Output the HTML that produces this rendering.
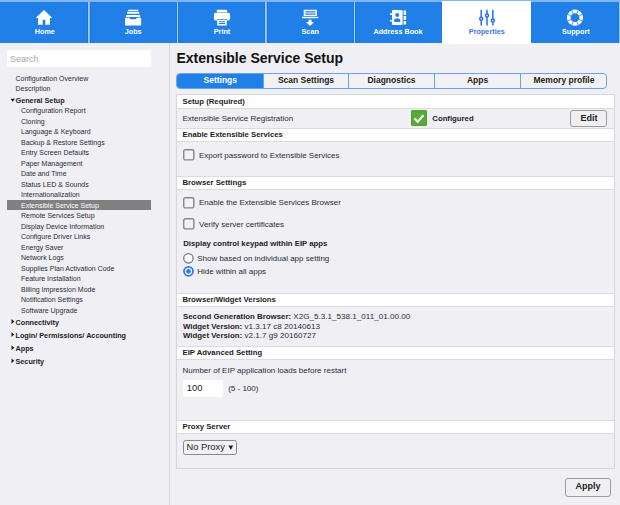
<!DOCTYPE html>
<html><head><meta charset="utf-8"><title>Extensible Service Setup</title>
<style>
*{box-sizing:border-box;margin:0;padding:0}
html,body{width:620px;height:505px;overflow:hidden;background:#efeff4;font-family:"Liberation Sans",Arial,sans-serif;color:#222}
body{position:relative}
.abs{position:absolute}
#nav{position:absolute;left:0;top:0;width:620px;height:43px;background:#2080e8;border-top:2px solid #80b6f3}
.lb{position:absolute;top:24.5px;width:60px;text-align:center;color:#fff;font-weight:bold;font-size:7.25px;line-height:9px;white-space:nowrap}
.ic{position:absolute;top:7px;width:20px;height:18px}
.wt{position:absolute;left:442px;top:-1px;width:89px;height:43px;background:#fff}
.sep{position:absolute;top:0;width:1px;height:41px;background:#7db5f2;box-shadow:-1px 0 0 #1676e5,1px 0 0 #1676e5}
#side{position:absolute;left:0;top:43px;width:170px;height:462px;border-right:1px solid #d4d4da}
#search{position:absolute;left:7px;top:7px;width:144px;height:16.5px;background:#fff;border-radius:2px;font-size:9px;color:#a6a6a6;line-height:18px;padding-left:3px}
.it{position:absolute;left:15.5px;font-size:7px;line-height:10px;white-space:nowrap;color:#2c2c34}
.it.s{left:21px}
.it.h{font-weight:bold;font-size:7.25px;color:#222}
.it.h:before{content:"";position:absolute;left:-6px;top:0;width:6px;height:10px;background:#1a1a1a;clip-path:polygon(2px 1.5px,4.8px 3.9px,2px 6.3px)}
.it.h.open:before{clip-path:polygon(1.1px 2.7px,5.4px 2.7px,3.25px 5.7px)}
#sel{position:absolute;left:6.8px;top:157.2px;width:144.2px;height:10.3px;background:#808080}
h1{position:absolute;left:176.5px;top:49px;font-size:14px;line-height:18px;font-weight:bold;color:#111;white-space:nowrap}
#tabs{position:absolute;left:176px;top:73px;width:431px;height:16px;border:1px solid #64a5eb;border-radius:4px;background:#f1f1f6;overflow:hidden}
#tabs div{position:absolute;top:-1px;height:16px;line-height:15.5px;text-align:center;font-weight:bold;font-size:8.5px;color:#222;border-left:1px solid #64a5eb}
#tabs div.on{background:#2080e8;color:#fff;border-left:0}
#panel{position:absolute;left:176px;top:94px;width:439px;height:375px;border:1px solid #d6d6dc;background:#efeff4}
.hd{position:absolute;left:0;width:437px;height:14px;background:#fff;border-top:1px solid #dcdce0;border-bottom:1px solid #dcdce0;font-weight:bold;font-size:7.75px;line-height:12.5px;padding-left:5.5px;color:#222}
.tx{position:absolute;font-size:8px;line-height:10px;white-space:nowrap;color:#2c2c34}
.b{font-weight:bold;color:#222}
.vv .b{font-size:7.850px}
.btn{position:absolute;border:1px solid #9c9c9c;border-radius:3px;background:#f0f0f2;font-weight:bold;font-size:9px;text-align:center;color:#222}
</style></head><body>
<div id="nav">
 <div class="wt"></div>
 <div class="sep" style="left:88px;width:2px;background:linear-gradient(90deg,#a6c9f5 50%,#8dbaf2 50%)"></div><div class="sep" style="left:177px;background:#b9d4f7"></div><div class="sep" style="left:265px;width:2px;background:linear-gradient(90deg,#a6c9f5 50%,#8dbaf2 50%)"></div><div class="sep" style="left:354px;background:#b9d4f7"></div><div class="sep" style="left:619px;background:#a6c9f5"></div>
 <svg class="ic" style="left:34.07px" viewBox="0 0 20 18"><path fill="#fff" d="M10 0.9 L1.7 8.9 H4 V15.8 H8.7 V10.8 H11.3 V15.8 H16 V8.9 H18.3 Z"/></svg>
 <span class="lb" style="left:14.8px">Home</span>
 <svg class="ic" style="left:123.15px" viewBox="0 0 20 18"><path fill="#fff" fill-rule="evenodd" d="M5.2 .7h10v1.3h-10zM4.2 2.8h12v2h-12zM3.1 5.9h14.1v2.2H3.1zM2.1 8.7H6.6c.3 1.2.8 1.6 1.6 1.6h3.9c.8 0 1.3-.4 1.6-1.6h4.4v7.2q0 .7-.7.7H2.8q-.7 0-.7-.7z"/></svg>
 <span class="lb" style="left:103.2px">Jobs</span>
 <svg class="ic" style="left:211.95px" viewBox="0 0 20 18"><path fill="#fff" fill-rule="evenodd" d="M5.600 .700h8.800q.8 0 .8.800V3.300H4.800V1.500q0-.8.800-.8zM3.600 3.700h12.800q1.700 0 1.700 1.700v4.300q0 1.700-1.700 1.700h-1.200v-1.200H4.800v1.200H3.600q-1.700 0-1.700-1.700V5.400q0-1.700 1.700-1.700zM5.200 10.900h9.600v5.100q0 .6-.6.600H5.800q-.6 0-.6-.6zM6.800 12.300v1h6.400v-1zM6.800 14.100v.9h6.400v-.9z"/></svg>
 <span class="lb" style="left:192px">Print</span>
 <svg class="ic" style="left:300.05px" viewBox="0 0 20 18"><path fill="#fff" fill-rule="evenodd" d="M3.700 .700h13.200v6.200H3.700zM5.200 2.300v1.300h10.300V2.300zM5.200 4.400v1.300h10.300V4.400zM1.900 7.800h16.300v1.500H1.900zM8.500 10.800h3v2.100h2.500L10 16.900 6 12.900h2.500z"/></svg>
 <span class="lb" style="left:280.2px">Scan</span>
 <svg class="ic" style="left:388.0px" viewBox="0 0 20 18"><path fill="#fff" fill-rule="evenodd" d="M4.700 1.100h9.200q.7 0 .7.700v13.500q0 .700-.700.700H4.700q-.700 0-.700-.700V12.600H1.900V10.900H4V5.900H1.900V4.300H4V1.800q0-.700.700-.700zM9.200 3.900a2 2 0 1 1 0 4a2 2 0 0 1 0-4zM6.100 13v-1.500c0-3 6.200-3 6.200 0V13zM15.600 1.500h1.900q.6 0 .6.600v3.800h-2.500zM15.600 6.900h2.500v4.200h-2.500zM15.600 12.100h2.500v2.900q0 .6-.6.6h-1.900z"/></svg>
 <span class="lb" style="left:368px">Address Book</span>
 <svg class="ic" style="left:476.76px" viewBox="0 0 20 18"><g stroke="#2b6fee" stroke-width="1.5" fill="#fff"><path d="M4.200 .8v15.600M10 .8v15.600M15.850 .8v15.600"/><circle cx="4.200" cy="9.700" r="1.500"/><circle cx="10" cy="6.500" r="1.500"/><circle cx="15.850" cy="11.400" r="1.500"/></g></svg>
 <span class="lb" style="left:456.8px;color:#3a78e8">Properties</span>
 <svg class="ic" style="left:565.3px" viewBox="0 0 20 18"><circle cx="10" cy="8.700" r="6.250" fill="none" stroke="#fff" stroke-width="3.700"/><path d="M11.55 5.23L13.58 0.66M13.47 7.15L18.04 5.12M13.47 10.25L18.04 12.28M11.55 12.17L13.58 16.74M8.45 12.17L6.42 16.74M6.53 10.25L1.96 12.28M6.53 7.15L1.96 5.12M8.45 5.23L6.42 0.66" stroke="#2080e8" stroke-width=".8" fill="none"/></svg>
 <span class="lb" style="left:545.8px">Support</span>
</div>
<div id="side">
 <div id="search">Search</div>
 <div id="sel"></div>
 <div class="it" style="top:30.5px">Configuration Overview</div>
 <div class="it" style="top:40.5px">Description</div>
 <div class="it h open" style="top:53px">General Setup</div>
 <div class="it s" style="top:63px">Configuration Report</div>
 <div class="it s" style="top:73.5px">Cloning</div>
 <div class="it s" style="top:84px">Language &amp; Keyboard</div>
 <div class="it s" style="top:94.5px">Backup &amp; Restore Settings</div>
 <div class="it s" style="top:105px">Entry Screen Defaults</div>
 <div class="it s" style="top:115.5px">Paper Management</div>
 <div class="it s" style="top:126px">Date and Time</div>
 <div class="it s" style="top:136.5px">Status LED &amp; Sounds</div>
 <div class="it s" style="top:147px">Internationalization</div>
 <div class="it s" style="top:157.5px;color:#fff">Extensible Service Setup</div>
 <div class="it s" style="top:168px">Remote Services Setup</div>
 <div class="it s" style="top:178.5px">Display Device Information</div>
 <div class="it s" style="top:189px">Configure Driver Links</div>
 <div class="it s" style="top:199.5px">Energy Saver</div>
 <div class="it s" style="top:210px">Network Logs</div>
 <div class="it s" style="top:220.5px">Supplies Plan Activation Code</div>
 <div class="it s" style="top:231px">Feature Installation</div>
 <div class="it s" style="top:241.5px">Billing Impression Mode</div>
 <div class="it s" style="top:252px">Notification Settings</div>
 <div class="it s" style="top:262.5px">Software Upgrade</div>
 <div class="it h" style="top:274.6px">Connectivity</div>
 <div class="it h" style="top:287.7px">Login/ Permissions/ Accounting</div>
 <div class="it h" style="top:300.8px">Apps</div>
 <div class="it h" style="top:313.9px">Security</div>
</div>
<h1>Extensible Service Setup</h1>
<div id="tabs">
 <div class="on" style="left:-1px;width:87px;padding-left:1.500px">Settings</div>
 <div style="left:86px;width:85px">Scan Settings</div>
 <div style="left:171px;width:86px">Diagnostics</div>
 <div style="left:257px;width:86px">Apps</div>
 <div style="left:343px;width:87px">Memory profile</div>
</div>
<div id="panel">
 <div class="hd" style="top:0;border-top:0;height:14px;line-height:13.500px">Setup (Required)</div>
 <div class="tx" style="left:5.500px;top:19px">Extensible Service Registration</div>
 <div class="abs" style="left:234px;top:14.7px;width:16.2px;height:16.2px;background:#56aa36;border-radius:2px;box-shadow:inset 0 0 0 .6px #4b9a30"><svg viewBox="0 0 15 15" width="16.2" height="16.2" style="display:block"><path d="M3.3 7.8l3 3 5.2-6" fill="none" stroke="#fff" stroke-width="2"/></svg></div>
 <div class="tx b" style="left:255.3px;top:19px;font-size:7.75px">Configured</div>
 <div class="btn" style="left:393.400px;top:14.700px;width:37.100px;height:17.300px;line-height:15.500px">Edit</div>
 <div class="hd" style="top:33px">Enable Extensible Services</div>
 <svg class="abs" style="left:6px;top:54.1px" width="13" height="13" viewBox="0 0 13 13"><rect x=".75" y=".75" width="10.100" height="10.100" rx="1.600" fill="#f3f3f7" stroke="#85858e" stroke-width="1.400"/></svg>
 <div class="tx" style="left:22px;top:56px">Export password to Extensible Services</div>
 <div class="hd" style="top:80.5px">Browser Settings</div>
 <svg class="abs" style="left:6px;top:101.9px" width="13" height="13" viewBox="0 0 13 13"><rect x=".75" y=".75" width="10.100" height="10.100" rx="1.600" fill="#f3f3f7" stroke="#85858e" stroke-width="1.400"/></svg>
 <div class="tx" style="left:22px;top:103px">Enable the Extensible Services Browser</div>
 <svg class="abs" style="left:6px;top:123.2px" width="13" height="13" viewBox="0 0 13 13"><rect x=".75" y=".75" width="10.100" height="10.100" rx="1.600" fill="#f3f3f7" stroke="#85858e" stroke-width="1.400"/></svg>
 <div class="tx" style="left:22px;top:124.6px">Verify server certificates</div>
 <div class="tx b" style="left:6.2px;top:144px;font-size:7.75px">Display control keypad within EIP apps</div>
 <svg class="abs" style="left:5px;top:157px" width="13" height="13" viewBox="0 0 13 13"><circle cx="6.4" cy="6.3" r="4.7" fill="#fff" stroke="#7a7a82" stroke-width="1.3"/></svg>
 <div class="tx" style="left:20.2px;top:158.6px">Show based on individual app setting</div>
 <svg class="abs" style="left:5px;top:170px" width="13" height="13" viewBox="0 0 13 13"><circle cx="6.5" cy="6.3" r="4.5" fill="#fff" stroke="#2b7be9" stroke-width="1.8"/><circle cx="6.500" cy="6.300" r="2.4" fill="#2b7be9"/></svg>
 <div class="tx" style="left:20.2px;top:172px">Hide within all apps</div>
 <div class="hd" style="top:198px">Browser/Widget Versions</div>
 <div class="tx vv" style="left:6px;top:217.4px;line-height:9.200px;font-size:8.100px"><span class="b">Second Generation Browser:</span> X2G_5.3.1_538.1_011_01.00.00<br><span class="b">Widget Version:</span> v1.3.17 c8 20140613<br><span class="b">Widget Version:</span> v2.1.7 g9 20160727</div>
 <div class="hd" style="top:251.3px">EIP Advanced Setting</div>
 <div class="tx" style="left:5.5px;top:271.2px">Number of EIP application loads before restart</div>
 <div class="abs" style="left:6px;top:284.6px;width:40px;height:17px;background:#fff;border-radius:2px;font-size:9.4px;line-height:16.4px;padding-left:3.8px;color:#222">100</div>
 <div class="tx" style="left:51.2px;top:288.8px;font-size:8px">(5 - 100)</div>
 <div class="hd" style="top:325px">Proxy Server</div>
 <div class="abs" style="left:6px;top:345px;width:53.600px;height:15px;border:1px solid #8a8a8a;border-radius:2.500px;background:#f2f2f4;font-size:9.300px;line-height:12.600px;padding-left:2.600px;color:#222;white-space:nowrap">No Proxy<svg class="abs" style="left:43.600px;top:3.800px" width="6" height="6" viewBox="0 0 6 6"><path d="M.4 .6h4.800L2.800 4.900z" fill="#222"/></svg></div>
</div>
<div class="btn" style="left:565px;top:478.3px;width:46px;height:18.3px;line-height:15.8px">Apply</div>
</body></html>
